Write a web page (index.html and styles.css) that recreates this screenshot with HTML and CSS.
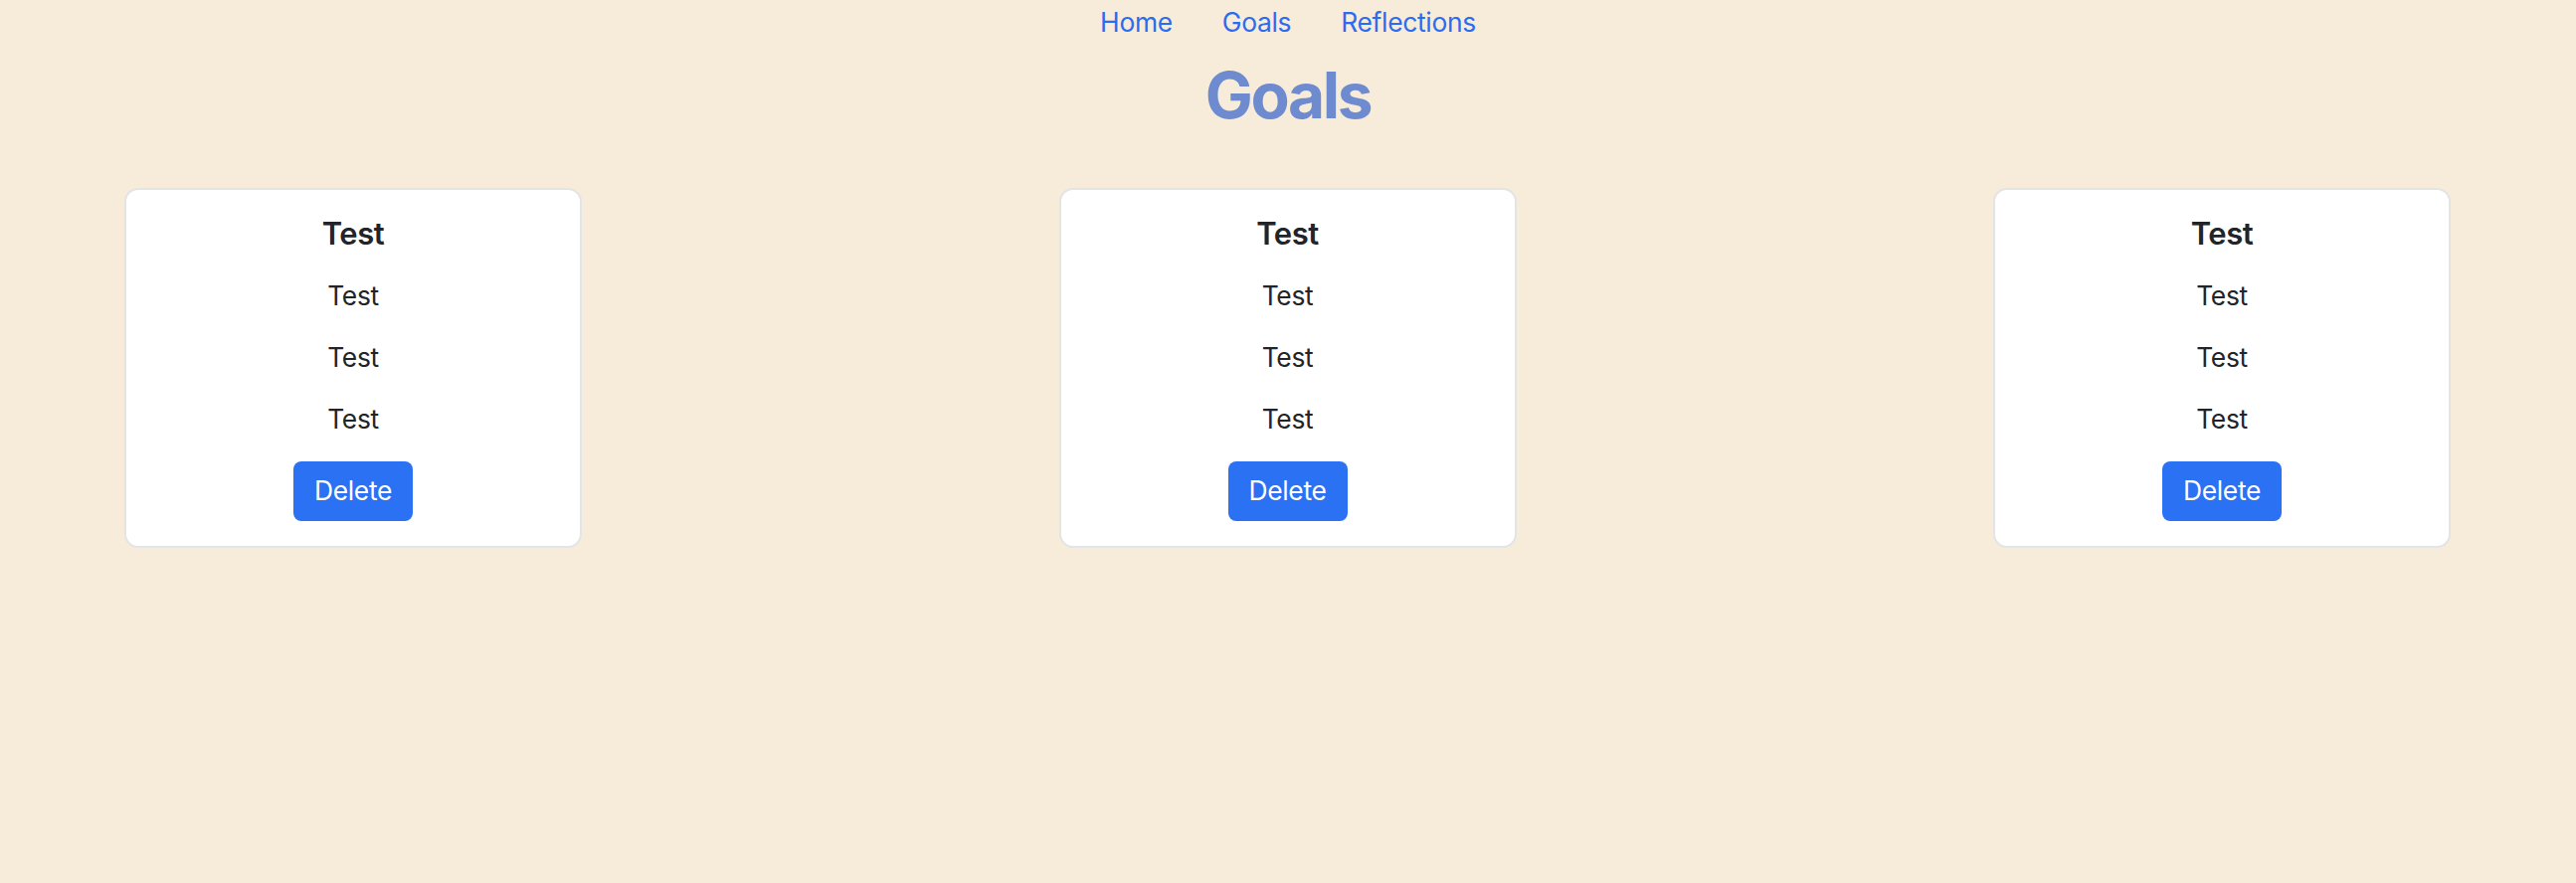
FILE: index.html
```html
<!DOCTYPE html>
<html lang="en">
<head>
<meta charset="utf-8">
<title>Goals</title>
<link rel="stylesheet" href="styles.css">
</head>
<body>
<nav class="nav">
  <a class="nav-link" href="#">Home</a>
  <a class="nav-link" href="#">Goals</a>
  <a class="nav-link" href="#">Reflections</a>
</nav>
<h1 class="page-title">Goals</h1>
<main class="cards">
  <div class="card">
    <h2 class="card-title">Test</h2>
    <p class="card-text">Test</p>
    <p class="card-text">Test</p>
    <p class="card-text">Test</p>
    <button class="btn-delete">Delete</button>
  </div>
  <div class="card">
    <h2 class="card-title">Test</h2>
    <p class="card-text">Test</p>
    <p class="card-text">Test</p>
    <p class="card-text">Test</p>
    <button class="btn-delete">Delete</button>
  </div>
  <div class="card">
    <h2 class="card-title">Test</h2>
    <p class="card-text">Test</p>
    <p class="card-text">Test</p>
    <p class="card-text">Test</p>
    <button class="btn-delete">Delete</button>
  </div>
</main>
</body>
</html>
```

FILE: styles.css
```css
* { box-sizing: border-box; }

html, body {
  margin: 0;
  padding: 0;
}

body {
  background: #f7ebda;
  font-family: Inter, "Noto Sans", sans-serif;
  font-size: 26.4px;
  line-height: 1.5;
  letter-spacing: -0.3px;
  color: #212529;
}

.nav {
  display: flex;
  justify-content: center;
  gap: 50px;
  padding-top: 3px;
  height: 43px;
}

.nav-link {
  color: #2b6cf0;
  text-decoration: none;
  line-height: 39.6px;
}

.page-title {
  margin: 12.5px 0 0;
  text-align: center;
  font-size: 64px;
  font-weight: 700;
  line-height: 79.2px;
  letter-spacing: -2.4px;
  color: #6e8bd0;
}

.cards {
  display: flex;
  justify-content: space-between;
  align-items: flex-start;
  padding: 0 126px 0 125px;
  margin-top: 54.4px;
}

.card {
  width: 460px;
  background: #ffffff;
  border: 2px solid #e3e4e6;
  border-radius: 14px;
  padding: 25px 26px 25px;
  display: flex;
  flex-direction: column;
  align-items: center;
  text-align: center;
}

.card-title {
  margin: 0 0 25px;
  font-size: 31px;
  font-weight: 600;
  line-height: 37px;
  letter-spacing: -0.4px;
}

.card-text {
  margin: 0 0 22.4px;
  line-height: 39.6px;
}

.btn-delete {
  font-family: inherit;
  font-size: 26.4px;
  line-height: 39.6px;
  letter-spacing: -0.3px;
  color: #ffffff;
  background: #2b71f3;
  border: none;
  border-radius: 8px;
  padding: 10px 20px;
  width: 120px;
  height: 60px;
  cursor: pointer;
}
```
